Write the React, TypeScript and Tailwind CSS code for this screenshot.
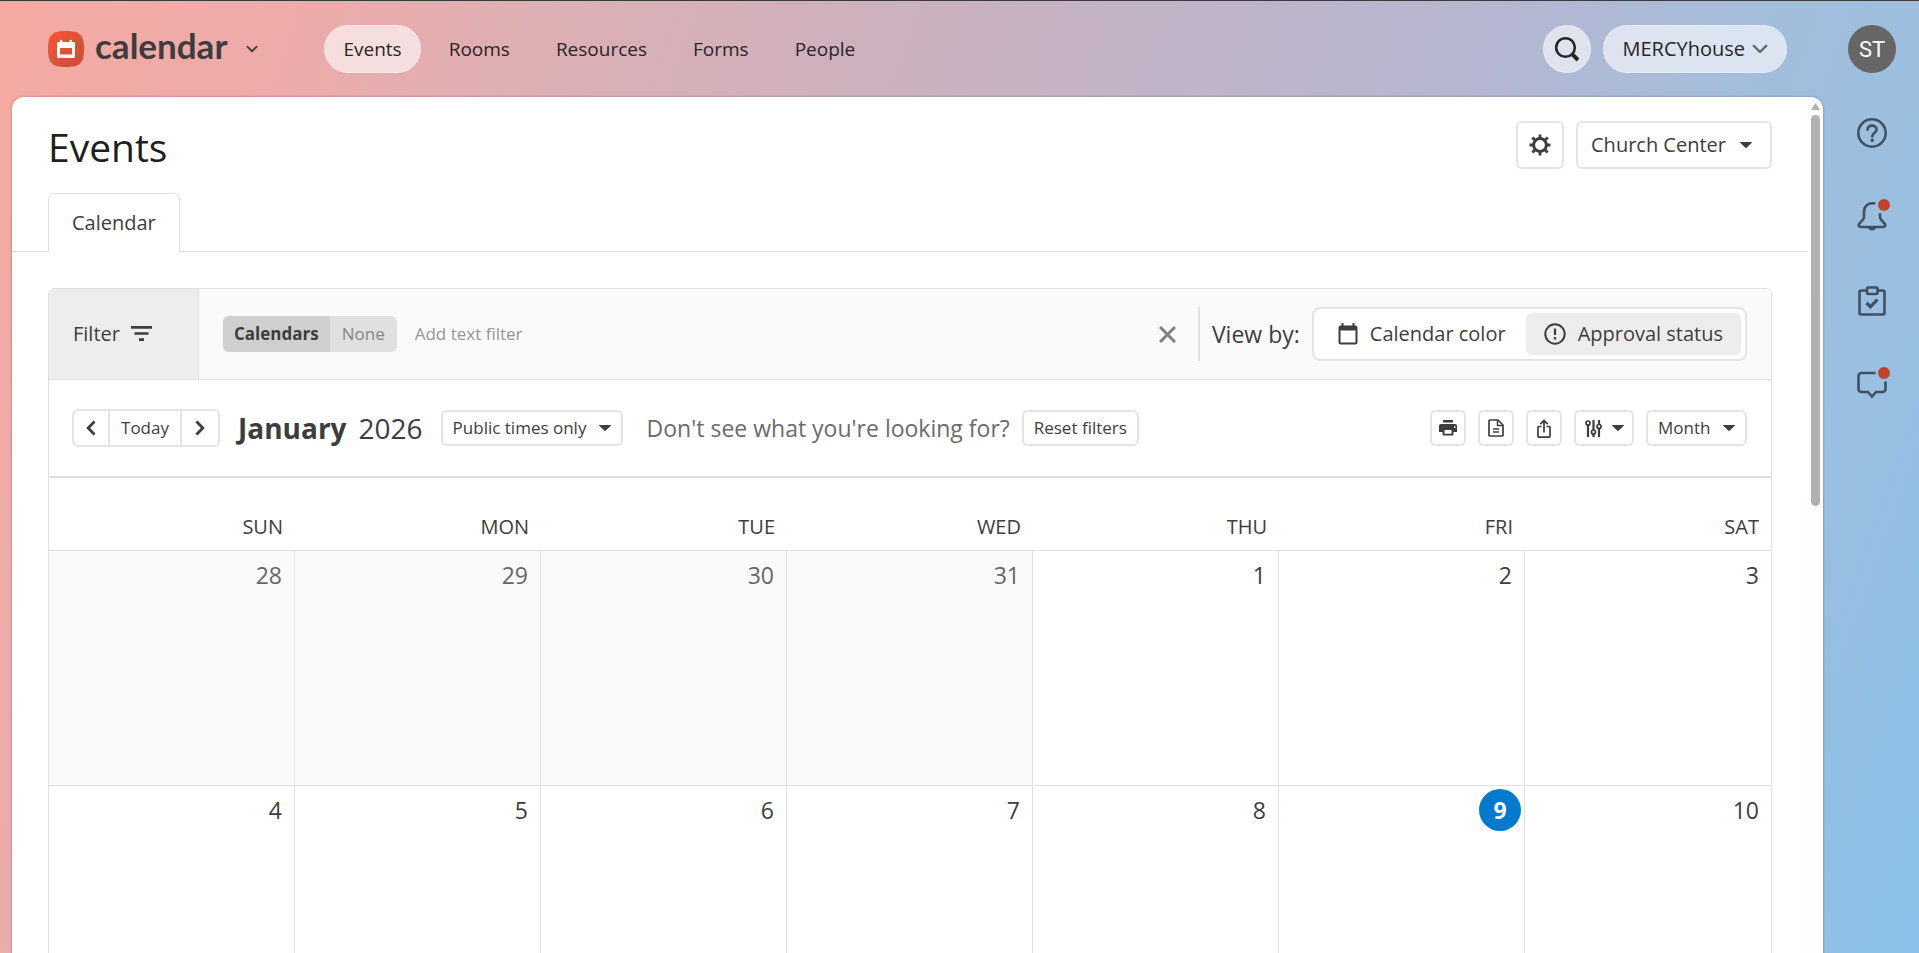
import { ReactNode } from 'react';
import clsx from 'clsx';

interface IconProps {
  className?: string;
}

const CaretIcon = ({ className }: IconProps) => (
  <svg className={className} width="12" height="6" viewBox="0 0 12 6" fill="currentColor" aria-hidden="true">
    <path d="M0.5 0h11a.4.4 0 0 1 .3.7L6.5 5.8a.7.7 0 0 1-1 0L.2.7A.4.4 0 0 1 .5 0z" />
  </svg>
);

const ChevronIcon = ({ className }: IconProps) => (
  <svg
    className={className}
    viewBox="0 0 16 10"
    fill="none"
    stroke="currentColor"
    strokeWidth="2.4"
    strokeLinecap="round"
    strokeLinejoin="round"
    aria-hidden="true"
  >
    <path d="M1.8 1.8 8 8l6.2-6.2" />
  </svg>
);

const LogoIcon = () => (
  <svg width="36" height="36" viewBox="0 0 36 36" aria-hidden="true">
    <defs>
      <linearGradient id="logo" x1="0" y1="0" x2="1" y2="1">
        <stop offset="0" stopColor="#fa5537" />
        <stop offset="1" stopColor="#c44f37" />
      </linearGradient>
    </defs>
    <path d="M18 0c14 0 18 4 18 18s-4 18-18 18S0 32 0 18 4 0 18 0z" fill="url(#logo)" />
    <path
      d="M12 10a1.2 1.2 0 0 1 2.4 0v1h7.2v-1a1.2 1.2 0 0 1 2.4 0v1h1.5a1.5 1.5 0 0 1 1.5 1.5v13a1.5 1.5 0 0 1-1.5 1.5h-15A1.5 1.5 0 0 1 9 25.5v-13a1.5 1.5 0 0 1 1.5-1.5H12zM12 17v6.5h12V17z"
      fill="#fff"
      fillRule="evenodd"
    />
  </svg>
);

const SearchIcon = () => (
  <svg width="26" height="26" viewBox="0 0 26 26" fill="none" stroke="currentColor" aria-hidden="true">
    <circle cx="11.5" cy="11.5" r="9.3" strokeWidth="2.6" />
    <path d="M18.2 18.2 24 24" strokeWidth="4" />
  </svg>
);

const GearIcon = () => (
  <svg width="22" height="22" viewBox="0 0 22 22" fill="none" stroke="currentColor" aria-hidden="true">
    <circle cx="11" cy="11" r="6.4" strokeWidth="3" />
    <path
      d="M11 .5v4M11 17.5v4M.5 11h4M17.5 11h4M3.4 3.4l2.8 2.8M15.8 15.8l2.8 2.8M3.4 18.6l2.8-2.8M15.8 6.2l2.8-2.8"
      strokeWidth="2.8"
    />
  </svg>
);

const FilterIcon = () => (
  <svg width="21" height="16" viewBox="0 0 21 16" fill="currentColor" aria-hidden="true">
    <path d="M0 0h21v2.7H0zM3.5 6.2h14v2.6h-14zM8 12.3h5V15H8z" />
  </svg>
);

const CloseIcon = () => (
  <svg width="17" height="17" viewBox="0 0 17 17" fill="none" stroke="currentColor" strokeWidth="3" aria-hidden="true">
    <path d="m1 1 15 15M16 1 1 16" />
  </svg>
);

const CalendarIcon = () => (
  <svg width="20" height="22" viewBox="0 0 20 22" fill="none" stroke="currentColor" aria-hidden="true">
    <rect x="1.5" y="3.5" width="17" height="17" rx="1.2" strokeWidth="2" />
    <path d="M1 3h18v4.5H1z" fill="currentColor" stroke="none" />
    <path d="M4.5 0v4M15.5 0v4" strokeWidth="2" />
  </svg>
);

const AlertIcon = () => (
  <svg width="22" height="22" viewBox="0 0 22 22" fill="none" stroke="currentColor" strokeWidth="2" aria-hidden="true">
    <circle cx="11" cy="11" r="9.7" />
    <path d="M11 5.5V12M11 14v2.4" strokeWidth="2.2" />
  </svg>
);

const ArrowIcon = ({ className }: IconProps) => (
  <svg
    className={className}
    width="10"
    height="16"
    viewBox="0 0 10 16"
    fill="none"
    stroke="currentColor"
    strokeWidth="2.8"
    aria-hidden="true"
  >
    <path d="M8.5 1.5 2.2 8l6.3 6.5" />
  </svg>
);

const PrintIcon = () => (
  <svg width="18" height="16" viewBox="0 0 18 16" fill="currentColor" aria-hidden="true">
    <path d="M4 0h10v2.5H4z" />
    <path
      d="M2 4h14a2 2 0 0 1 2 2v6h-3.5v2.5a1 1 0 0 1-1 1h-9a1 1 0 0 1-1-1V12H0V6a2 2 0 0 1 2-2zm3.5 6v3.8h7V10zM15 6.2v1.6h1.5V6.2z"
      fillRule="evenodd"
    />
  </svg>
);

const DocumentIcon = () => (
  <svg width="16" height="18" viewBox="0 0 16 18" fill="none" stroke="currentColor" strokeWidth="1.7" aria-hidden="true">
    <path d="M2 1h8l5 5v10.2a.8.8 0 0 1-.8.8H1.8a.8.8 0 0 1-.8-.8V1.8A.8.8 0 0 1 1.8 1z" />
    <path d="M9.5 1v5.5H15M5 10h6M5 13h6" strokeWidth="1.5" />
  </svg>
);

const ShareIcon = () => (
  <svg width="14" height="19" viewBox="0 0 14 19" fill="none" stroke="currentColor" strokeWidth="1.7" aria-hidden="true">
    <path d="M4.5 7.5H1.8a.8.8 0 0 0-.8.8v9a.8.8 0 0 0 .8.8h10.4a.8.8 0 0 0 .8-.8v-9a.8.8 0 0 0-.8-.8H9.5" />
    <path d="M7 13.5V2M3.3 5.2 7 1.5l3.7 3.7" />
  </svg>
);

const SlidersIcon = () => (
  <svg width="17" height="17" viewBox="0 0 17 17" fill="none" stroke="currentColor" strokeWidth="1.7" aria-hidden="true">
    <circle cx="3" cy="3" r="2" />
    <circle cx="8.5" cy="12" r="2" />
    <circle cx="14" cy="6.5" r="2" />
    <path d="M3 5v12M8.5 0v10M8.5 14v3M14 0v4.5M14 8.5V17" strokeWidth="2.2" />
  </svg>
);

const HelpIcon = () => (
  <svg width="30" height="30" viewBox="0 0 30 30" fill="none" stroke="currentColor" aria-hidden="true">
    <circle cx="15" cy="15" r="13.7" strokeWidth="2.5" />
    <path
      d="M10.5 11.8c0-2.6 1.9-4.2 4.5-4.2s4.6 1.5 4.6 3.9c0 3.2-4.4 3.5-4.4 7"
      strokeWidth="2.6"
      strokeLinecap="round"
    />
    <circle cx="15.2" cy="22.2" r="1.8" fill="currentColor" stroke="none" />
  </svg>
);

const BellIcon = () => (
  <svg width="30" height="30" viewBox="0 1 30 30" fill="none" stroke="currentColor" strokeWidth="2.6" aria-hidden="true">
    <path d="M18.3 2.6C11.5 1.2 7 5 7 10.5v5.2c0 1.3-.5 2.3-1.4 3.3l-3.2 3.5C.7 24.5 2.600 26 4 26h22c1.400 0 3.300-1.500 1.600-3.500L24.400 19c-.9-1-1.4-2-1.4-3.3v-3.4" />
    <path d="M10.5 26.5h9c-.8 2-2.5 3-4.5 3s-3.700-1-4.500-3z" fill="currentColor" stroke="none" />
  </svg>
);

const TasksIcon = () => (
  <svg width="30" height="30" viewBox="0 0 30 30" fill="none" stroke="currentColor" strokeWidth="2.6" aria-hidden="true">
    <path d="M9 4.5H4A1.5 1.5 0 0 0 2.5 6v21A1.5 1.5 0 0 0 4 28.5h22a1.5 1.5 0 0 0 1.5-1.5V6A1.5 1.5 0 0 0 26 4.5h-5" />
    <rect x="10" y="1.5" width="10.5" height="6.5" rx="1.5" />
    <path d="m9.5 17 4 3.7 7-7.2" strokeWidth="3.2" />
  </svg>
);

const ChatIcon = () => (
  <svg width="30" height="30" viewBox="0 0 30 30" fill="none" stroke="currentColor" strokeWidth="2.6" aria-hidden="true">
    <path d="M18.5 3h-14a3 3 0 0 0-3 3v13a3 3 0 0 0 3 3H11l4 4.5 4-4.5h6.5a3 3 0 0 0 3-3v-7.5" />
  </svg>
);

interface ToolButtonProps {
  label: string;
  className?: string;
  children: ReactNode;
}

const ToolButton = ({ label, className, children }: ToolButtonProps) => (
  <button
    type="button"
    aria-label={label}
    className={clsx(
      'flex h-9 items-center justify-center gap-2.5 rounded-md border-2 border-[#e4e4e4] bg-white',
      className ?? 'w-9',
    )}
  >
    {children}
  </button>
);

interface SelectProps {
  label: string;
  value: string;
}

const SmallSelect = ({ label, value }: SelectProps) => (
  <div className="relative flex">
    <select
      aria-label={label}
      defaultValue={value}
      className="h-9 appearance-none rounded-md border-2 border-[#e4e4e4] bg-white pr-[34px] pl-2.5 text-[17px]"
    >
      <option>{value}</option>
    </select>
    <CaretIcon className="pointer-events-none absolute top-[15px] right-3" />
  </div>
);

const navItems = ['Events', 'Rooms', 'Resources', 'Forms', 'People'];

const Header = () => (
  <header className="flex h-24 shrink-0 items-center justify-between px-9 text-[#262626]">
    <div className="flex items-center gap-[66px]">
      <button type="button" className="flex items-center gap-[11px] text-[#3d3d3d]">
        <LogoIcon />
        <span className="pb-2 font-['Lato'] text-[35px] leading-none font-bold">calendar</span>
        <ChevronIcon className="ml-2 h-2 w-3" />
      </button>
      <nav className="flex gap-2.5">
        {navItems.map((item) => (
          <a
            key={item}
            href="#"
            className={clsx(
              'flex h-12 items-center rounded-full px-[18px] text-[19px]',
              item === 'Events' && 'border border-white/30 bg-white/60',
            )}
          >
            {item}
          </a>
        ))}
      </nav>
    </div>
    <div className="flex gap-3">
      <button
        type="button"
        aria-label="Search"
        className="flex size-12 items-center justify-center rounded-full border border-white/30 bg-white/60"
      >
        <SearchIcon />
      </button>
      <button
        type="button"
        className="flex h-12 items-center gap-[7px] rounded-full border border-white/30 bg-white/60 px-[18px] text-[20px]"
      >
        MERCYhouse
        <ChevronIcon className="h-2.5 w-4 text-[#666]" />
      </button>
    </div>
  </header>
);

const sideItems = [
  { label: 'Help', icon: <HelpIcon />, alert: false },
  { label: 'Notifications', icon: <BellIcon />, alert: true },
  { label: 'Tasks', icon: <TasksIcon />, alert: false },
  { label: 'Messages', icon: <ChatIcon />, alert: true },
];

const Sidebar = () => (
  <aside className="flex w-24 shrink-0 flex-col items-center gap-[45px] pt-6 pl-0.5 text-[#3f5060]">
    <button type="button" className="size-12 rounded-full bg-[#666] font-['Roboto'] text-[22px] text-white">
      ST
    </button>
    <div className="flex flex-col gap-[54px]">
      {sideItems.map(({ label, icon, alert }) => (
        <button key={label} type="button" aria-label={label} className="relative size-[30px]">
          {icon}
          {alert && <span className="absolute -top-[3px] -right-[3px] size-3 rounded-full bg-[#c5432c]" />}
        </button>
      ))}
    </div>
  </aside>
);

const FilterBar = () => (
  <div className="flex h-[91px] border-b border-[#e0e0e0] bg-[#fafafa]">
    <button
      type="button"
      className="flex w-[150px] items-center gap-[11px] border-r border-[#e0e0e0] bg-[#ededed] pl-6 text-[20px]"
    >
      Filter
      <FilterIcon />
    </button>
    <div className="flex flex-1 items-center justify-between px-6">
      <div className="flex items-center gap-[18px] text-[17px]">
        <button type="button" className="flex h-9 overflow-hidden rounded-md">
          <span className="flex items-center self-stretch bg-[#cfcfcf] px-[11px] font-bold">Calendars</span>
          <span className="flex items-center self-stretch bg-[#e0e0e0] px-3 text-[#858585]">None</span>
        </button>
        <input
          type="text"
          aria-label="Add text filter"
          placeholder="Add text filter"
          className="w-60 bg-transparent outline-none placeholder:text-[#959595]"
        />
      </div>
      <div className="flex items-center">
        <button type="button" aria-label="Clear filters" className="text-[#808080]">
          <CloseIcon />
        </button>
        <fieldset className="ml-[22px] flex h-[54px] items-center gap-3 border-l-2 border-[#e0e0e0] pl-3">
          <span className="text-[23px]">View by:</span>
          <div className="flex h-[54px] items-center rounded-lg border-2 border-[#e4e4e4] bg-white p-1 text-[20px]">
            <label className="flex h-[42px] items-center gap-3 px-5">
              <input type="radio" name="view-by" className="sr-only" />
              <CalendarIcon />
              Calendar color
            </label>
            <label className="flex h-[42px] items-center gap-3 rounded-md bg-[#ededed] px-[18px]">
              <input type="radio" name="view-by" className="sr-only" defaultChecked />
              <AlertIcon />
              Approval status
            </label>
          </div>
        </fieldset>
      </div>
    </div>
  </div>
);

const Toolbar = () => (
  <div className="flex h-[98px] items-center justify-between border-b-2 border-[#e0e0e0] pr-6 pl-[23px]">
    <div className="flex items-center">
      <div className="flex h-[38px] divide-x-2 divide-[#e4e4e4] rounded-md border-2 border-[#e4e4e4]">
        <button type="button" aria-label="Previous month" className="flex w-9 items-center justify-center">
          <ArrowIcon />
        </button>
        <button type="button" className="w-[72px] text-[17px]">
          Today
        </button>
        <button type="button" aria-label="Next month" className="flex w-9 items-center justify-center">
          <ArrowIcon className="rotate-180" />
        </button>
      </div>
      <h2 className="ml-[18px] flex gap-3 text-[28px]">
        <strong>January</strong> 2026
      </h2>
      <div className="ml-[18px]">
        <SmallSelect label="Times shown" value="Public times only" />
      </div>
      <p className="mr-3 ml-6 text-[23px] text-[#6b6b6b]">Don't see what you're looking for?</p>
      <button type="button" className="h-9 rounded-md border-2 border-[#e4e4e4] bg-white px-2.5 text-[17px]">
        Reset filters
      </button>
    </div>
    <div className="flex items-center gap-3">
      <ToolButton label="Print">
        <PrintIcon />
      </ToolButton>
      <ToolButton label="Report">
        <DocumentIcon />
      </ToolButton>
      <ToolButton label="Share">
        <ShareIcon />
      </ToolButton>
      <ToolButton label="Display options" className="w-[60px]">
        <SlidersIcon />
        <CaretIcon />
      </ToolButton>
      <SmallSelect label="Calendar range" value="Month" />
    </div>
  </div>
);

const weekdays = ['SUN', 'MON', 'TUE', 'WED', 'THU', 'FRI', 'SAT'];
const weeks = [
  [28, 29, 30, 31, 1, 2, 3],
  [4, 5, 6, 7, 8, 9, 10],
];
const today = 9;

const MonthGrid = () => (
  <table className="w-full table-fixed border-separate border-spacing-0">
    <thead>
      <tr>
        {weekdays.map((day) => (
          <th
            key={day}
            className="h-[73px] border-b border-[#e0e0e0] pr-3 pb-2 text-right align-bottom text-[20px] font-normal"
          >
            {day}
          </th>
        ))}
      </tr>
    </thead>
    <tbody>
      {weeks.map((week) => (
        <tr key={week[0]}>
          {week.map((day) => (
            <td
              key={day}
              className={clsx(
                'h-[235px] border-r border-b border-[#e0e0e0] p-[3px] align-top text-[23px] last:border-r-0',
                day > 20 && 'bg-[#fafafa] text-[#666]',
              )}
            >
              <div
                className={clsx(
                  'ml-auto flex h-[42px] items-center',
                  day === today
                    ? 'w-[42px] justify-center rounded-full bg-[#007acf] font-bold text-white'
                    : 'justify-end pr-[9px]',
                )}
              >
                {day}
              </div>
            </td>
          ))}
        </tr>
      ))}
    </tbody>
  </table>
);

const Scrollbar = () => (
  <div className="flex w-[15px] shrink-0 flex-col items-center pt-1.5 pr-px" aria-hidden="true">
    <svg width="9" height="7" viewBox="0 0 9 7" fill="#b0b0b0">
      <path d="M4.5 0 9 7H0z" />
    </svg>
    <div className="mt-[5px] h-[46%] w-[9px] rounded-full bg-[#b0b0b0]" />
  </div>
);

const App = () => {
  return (
    <div className="flex h-screen overflow-hidden border-t border-[#3a3a3e] bg-[linear-gradient(110deg,#f6aaa3_0%,#ebabab_15%,#dfafb2_23%,#cab1c0_42%,#b5b7d2_67%,#a3bddb_78%,#9bbfe0_87%,#8ac0e8_100%)] font-['Open_Sans',sans-serif] text-[#3d3d3d]">
      <div className="flex min-w-0 flex-1 flex-col pl-3">
        <Header />
        <div className="flex min-h-0 flex-1 rounded-t-xl bg-white shadow-[0_0_2px_1px_rgba(0,0,0,0.15)]">
          <main className="min-w-0 flex-1 overflow-hidden pt-6">
            <div className="flex h-12 items-center justify-between px-9">
              <h1 className="pt-0.5 text-[39px] leading-none text-[#1f1f1f]">Events</h1>
              <div className="flex gap-3">
                <button
                  type="button"
                  aria-label="Settings"
                  className="flex size-12 items-center justify-center rounded-md border-2 border-[#e4e4e4]"
                >
                  <GearIcon />
                </button>
                <button
                  type="button"
                  className="flex h-12 items-center gap-[14px] rounded-md border-2 border-[#e4e4e4] pr-[18px] pl-[13px] text-[20px]"
                >
                  Church Center
                  <CaretIcon />
                </button>
              </div>
            </div>
            <div className="mt-6 flex border-b border-[#e0e0e0] px-9">
              <a
                href="#"
                className="-mb-px flex h-[59px] items-center rounded-t-md border border-b-0 border-[#e0e0e0] bg-white px-[23px] text-[20px]"
              >
                Calendar
              </a>
            </div>
            <section className="mx-9 mt-9 overflow-hidden rounded-t-md border border-[#e0e0e0]">
              <FilterBar />
              <Toolbar />
              <MonthGrid />
            </section>
          </main>
          <Scrollbar />
        </div>
      </div>
      <Sidebar />
    </div>
  );
};

export default App;
